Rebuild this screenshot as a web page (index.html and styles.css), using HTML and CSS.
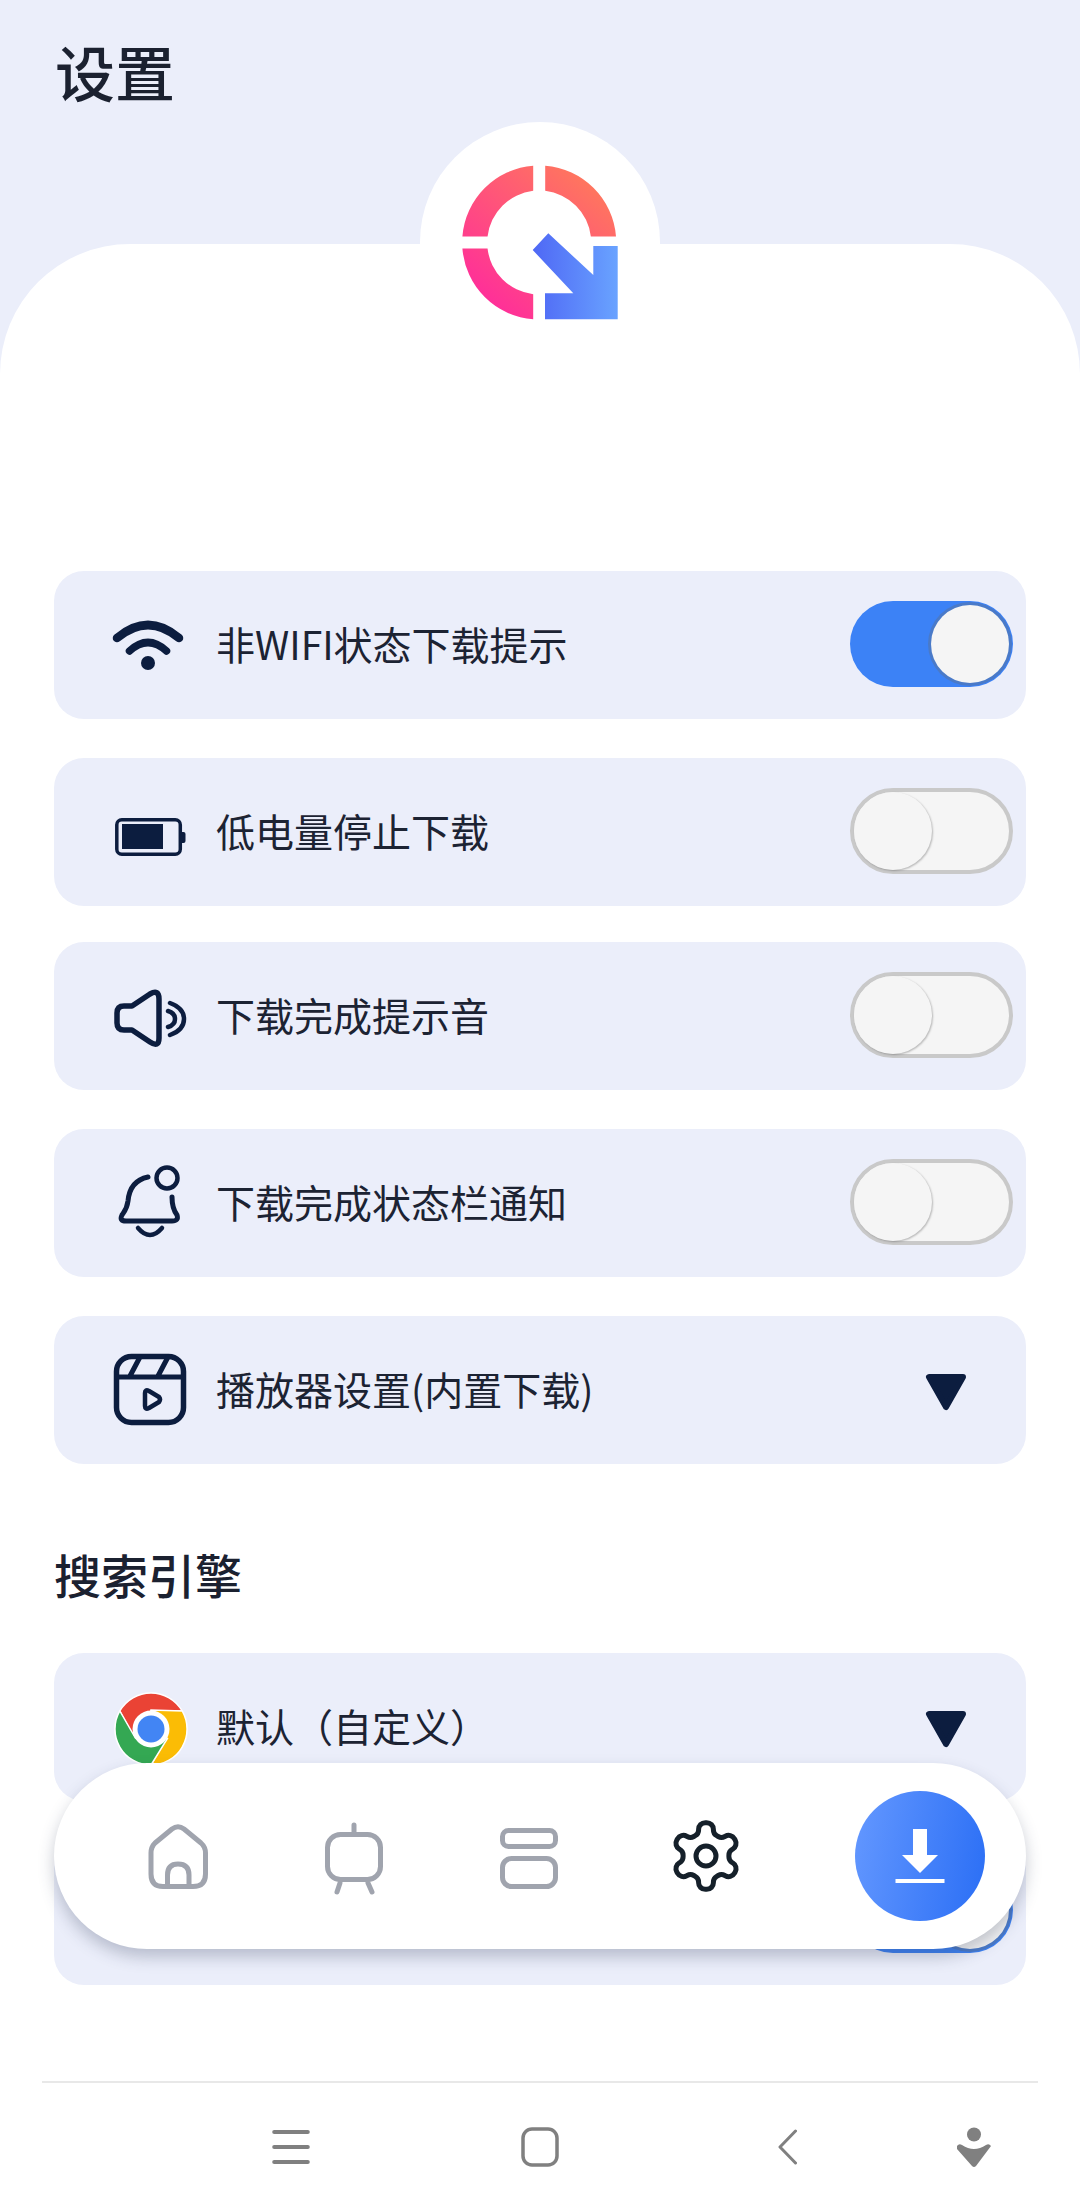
FILE: index.html
```html
<!DOCTYPE html>
<html lang="zh-CN">
<head>
<meta charset="utf-8">
<title>设置</title>
<link rel="stylesheet" href="styles.css">
</head>
<body>
<div class="page">
  <header class="header"><h1 class="title">设置</h1></header>
  <main class="sheet">
    <div class="logo-badge">
      <svg class="logo" viewBox="430 130 220 220" width="220" height="220">
        <defs>
          <linearGradient id="ringGrad" gradientUnits="userSpaceOnUse" x1="600" y1="170" x2="480" y2="310"><stop offset="0" stop-color="#ff7d58"/><stop offset="1" stop-color="#ff2a9d"/></linearGradient>
          <linearGradient id="arrowGrad" gradientUnits="userSpaceOnUse" x1="533" y1="280" x2="618" y2="280"><stop offset="0" stop-color="#4f68f5"/><stop offset="1" stop-color="#69a3ff"/></linearGradient>
        </defs>
        <path fill="url(#ringGrad)" d="M533.2 165.7A77 77 0 0 0 462.4 236.5H487.55A52 52 0 0 1 533.2 190.85Z"/>
        <path fill="url(#ringGrad)" d="M545.2 165.7A77 77 0 0 1 616 236.5H590.85A52 52 0 0 0 545.2 190.85Z"/>
        <path fill="url(#ringGrad)" d="M533.2 319.3A77 77 0 0 1 462.4 248.5H487.55A52 52 0 0 0 533.2 294.15Z"/>
        <path fill="url(#arrowGrad)" d="M548.3 233.3L532.7 250L573.3 293.3H545V319.3H617.7V246H593.3V275Z"/>
      </svg>
    </div>

    <section class="group">
      <div class="card">
        <svg class="icon" viewBox="0 0 76 80"><path class="st" stroke-width="8.500" d="M7 33Q38 7 69 33"/><path class="st" stroke-width="7.500" d="M19.500 46Q38 29 56.500 46"/><circle class="fl" cx="38" cy="58" r="7"/></svg>
        <span class="label">非WIFI状态下载提示</span>
        <span class="toggle on"><span class="knob"></span></span>
      </div>
      <div class="card">
        <svg class="icon" viewBox="0 0 76 80"><rect class="st" stroke-width="3.500" x="6.800" y="27.800" width="63.500" height="34.500" rx="5"/><rect class="fl" x="12" y="32" width="41" height="25"/><path class="fl" d="M72 40h1.500a2 2 0 0 1 2 2v7a2 2 0 0 1-2 2H72Z"/></svg>
        <span class="label">低电量停止下载</span>
        <span class="toggle"><span class="knob"></span></span>
      </div>
      <div class="card card-close">
        <svg class="icon" viewBox="0 0 76 80"><path class="st" stroke-width="5.500" d="M14 30H22L40 18Q49 13 49 23V62Q49 72 40 66L22 54H14Q7 54 7 47V37Q7 30 14 30Z"/><path class="st" stroke-width="4.500" d="M60 27Q74 32 74 43Q74 54 60 59"/><path class="st" stroke-width="4.500" d="M58 35Q65 37 65 43Q65 49 58 51"/></svg>
        <span class="label">下载完成提示音</span>
        <span class="toggle"><span class="knob"></span></span>
      </div>
      <div class="card">
        <svg class="icon" viewBox="0 0 76 80"><circle class="st" stroke-width="4.500" cx="57" cy="15" r="10.500"/><path class="st" stroke-width="5" d="M38 14C24 17 19 27 18 38C17 46 14 49 12 52Q9 58 16 58H62Q69 58 67 52C64 48 62 43 62 34"/><path class="st" stroke-width="4.500" d="M28 65Q40 79 52 65"/></svg>
        <span class="label">下载完成状态栏通知</span>
        <span class="toggle"><span class="knob"></span></span>
      </div>
      <div class="card">
        <svg class="icon" viewBox="0 0 76 80"><rect class="st" stroke-width="5.500" x="6.500" y="6.500" width="67" height="66" rx="15"/><path class="st" stroke-width="5" d="M6.500 27H73.500M30 7L20 26M58 7L48 26"/><path class="st" stroke-width="4.500" d="M35 43Q35 39 39 41L49 47Q51 49.500 49 52L39 58Q35 60 35 56Z"/></svg>
        <span class="label">播放器设置(内置下载)</span>
        <svg class="caret" viewBox="0 0 44 40"><path class="caret-path" d="M5 5H39L22 35Z"/></svg>
      </div>
    </section>

    <h2 class="section-title">搜索引擎</h2>

    <section class="group group-tight">
      <div class="card">
        <svg class="icon" viewBox="0 0 76 80">
          <path class="seg-red" d="M9.800 24A36 36 0 0 1 72.200 24H41L41 42L24.550 51.500Z"/>
          <path class="seg-yellow" transform="rotate(120 41 42)" d="M9.800 24A36 36 0 0 1 72.200 24H41L41 42L24.550 51.500Z"/>
          <path class="seg-green" transform="rotate(240 41 42)" d="M9.800 24A36 36 0 0 1 72.200 24H41L41 42L24.550 51.500Z"/>
          <circle class="chrome-ring" cx="41" cy="42" r="18.500"/>
          <circle class="chrome-dot" cx="41" cy="42" r="13.500"/>
        </svg>
        <span class="label">默认（自定义）</span>
        <svg class="caret" viewBox="0 0 44 40"><path class="caret-path" d="M5 5H39L22 35Z"/></svg>
      </div>
      <div class="card">
        <span class="toggle on"><span class="knob"></span></span>
      </div>
    </section>

    <footer class="sysbar">
      <div class="sysbar-icons">
        <svg class="sys sys-menu" viewBox="0 0 38 36"><path class="sys-st" stroke-width="4" d="M2.200 3H35.800M2.200 18H35.800M2.200 33H35.800"/></svg>
        <svg class="sys sys-home" viewBox="0 0 38 40"><rect class="sys-st" stroke-width="3.500" x="2" y="2" width="34" height="36" rx="9"/></svg>
        <svg class="sys sys-back" viewBox="0 0 19 36"><path class="sys-st" stroke-width="3" d="M17.500 2L2 18L17.500 34"/></svg>
        <svg class="sys sys-person" viewBox="0 0 36 40"><ellipse class="sys-fl" cx="18" cy="7.500" rx="7" ry="7"/><path class="sys-fl" d="M1 19Q3 16 6 18Q12 22 18 22Q24 22 30 18Q33 16 35 19L20 39Q18 41 16 39L1 22Z"/></svg>
      </div>
    </footer>
  </main>

  <nav class="tabbar">
    <div class="tab">
      <svg class="tab-icon" viewBox="0 0 80 80"><path class="tab-st" d="M34 13Q40 8.500 46 13L63 27Q67.500 31 67.500 37V58Q67.500 70.500 55 70.500H25Q13 70.500 13 58V37Q13 31 17 27Z"/><path class="tab-st" d="M29.500 70V59Q29.500 48 40 48Q51 48 51 59V70"/></svg>
    </div>
    <div class="tab">
      <svg class="tab-icon" viewBox="0 0 80 80"><rect class="tab-st" x="13.500" y="18.500" width="53" height="45" rx="13"/><path class="tab-st" d="M40 9V18M26 67L23 76M54 67L58 76"/></svg>
    </div>
    <div class="tab">
      <svg class="tab-icon" viewBox="1 0 80 80"><rect class="tab-st" x="13.500" y="14.500" width="53" height="16" rx="6"/><rect class="tab-st" x="13.500" y="42.500" width="53" height="28" rx="9"/></svg>
    </div>
    <div class="tab">
      <svg class="tab-gear" viewBox="0 0 24 24"><path class="gear-st" d="M12.22 2h-.44a2 2 0 0 0-2 2v.18a2 2 0 0 1-1 1.730l-.43.25a2 2 0 0 1-2 0l-.15-.08a2 2 0 0 0-2.730.73l-.22.38a2 2 0 0 0 .73 2.730l.15.1a2 2 0 0 1 1 1.720v.51a2 2 0 0 1-1 1.740l-.15.09a2 2 0 0 0-.73 2.730l.22.38a2 2 0 0 0 2.730.73l.15-.08a2 2 0 0 1 2 0l.43.25a2 2 0 0 1 1 1.730V20a2 2 0 0 0 2 2h.44a2 2 0 0 0 2-2v-.18a2 2 0 0 1 1-1.730l.43-.25a2 2 0 0 1 2 0l.15.08a2 2 0 0 0 2.730-.73l.22-.39a2 2 0 0 0-.73-2.730l-.15-.08a2 2 0 0 1-1-1.740v-.5a2 2 0 0 1 1-1.740l.15-.09a2 2 0 0 0 .73-2.730l-.22-.38a2 2 0 0 0-2.730-.73l-.15.08a2 2 0 0 1-2 0l-.43-.25a2 2 0 0 1-1-1.730V4a2 2 0 0 0-2-2z"/><circle class="gear-st" cx="12" cy="12" r="3"/></svg>
    </div>
    <button class="fab" type="button" aria-label="下载">
      <svg class="fab-icon" viewBox="0 0 50 54"><path class="fab-fl" d="M18 0H32V26H43L25 44L7 26H18Z"/><rect class="fab-fl" x="0.500" y="50" width="49" height="4"/></svg>
    </button>
  </nav>
</div>
</body>
</html>
```
FILE: styles.css
```css
* { box-sizing: border-box; }
html, body { margin: 0; padding: 0; }
body {
  width: 1080px;
  height: 2211px;
  overflow: hidden;
  background: #ebeefa;
  font-family: "Noto Sans CJK SC", "Noto Sans", sans-serif;
  color: #1c2333;
}
.page {
  position: relative;
  width: 1080px;
  height: 2211px;
  display: flex;
  flex-direction: column;
}
.header {
  height: 244px;
  padding: 41px 0 0 55px;
  flex: none;
}
.title {
  margin: 0;
  font-size: 60px;
  line-height: 60px;
  font-weight: 500;
  color: #1b2130;
}
.sheet {
  position: relative;
  flex: 1;
  display: flex;
  flex-direction: column;
  background: #fff;
  border-radius: 130px 130px 0 0;
  padding-top: 327px;
}
.logo-badge {
  position: absolute;
  top: -122px;
  left: 420px;
  width: 240px;
  height: 240px;
  padding-bottom: 4px;
  border-radius: 50%;
  background: #fff;
  display: flex;
  align-items: center;
  justify-content: center;
}
.logo { display: block; flex: none; }
.group {
  display: flex;
  flex-direction: column;
  gap: 39px;
  padding: 0 54px;
}
.group-tight { gap: 36px; }
.card {
  height: 148px;
  border-radius: 30px;
  background: #ebeefa;
  display: flex;
  align-items: center;
  padding: 0 13px 0 56px;
}
.card-close { margin-top: -3px; }
.icon {
  width: 76px;
  height: 80px;
  flex: none;
  overflow: visible;
}
.st { fill: none; stroke: #0c1d3f; stroke-linecap: round; stroke-linejoin: round; }
.fl { fill: #0c1d3f; }
.label {
  margin-left: 30px;
  padding-bottom: 5px;
  font-size: 39px;
  line-height: 50px;
  white-space: nowrap;
}
.toggle {
  margin-left: auto;
  margin-bottom: 2px;
  width: 163px;
  height: 86px;
  flex: none;
  border-radius: 43px;
  border: 4px solid #c9c9c9;
  background: #f5f5f5;
  display: flex;
  align-items: center;
  justify-content: flex-start;
}
.toggle .knob {
  width: 78px;
  height: 78px;
  border-radius: 50%;
  background: #f5f5f5;
  box-shadow: 1px 1px 2px rgba(0, 0, 0, .25);
}
.toggle.on {
  border: 0;
  background: #3c82f6;
  justify-content: flex-end;
  padding-right: 4px;
}
.toggle.on .knob { box-shadow: 0 0 0 3px #4a7ac8; }
.caret {
  margin-left: auto;
  margin-right: 45px;
  margin-top: 4px;
  width: 44px;
  height: 40px;
  flex: none;
}
.caret-path { fill: #0c1d3f; stroke: #0c1d3f; stroke-width: 6; stroke-linejoin: round; }
.seg-red { fill: #ea4335; stroke: #fff; stroke-width: 1.5; }
.seg-yellow { fill: #fbbc05; stroke: #fff; stroke-width: 1.5; }
.seg-green { fill: #34a853; stroke: #fff; stroke-width: 1.5; }
.chrome-ring { fill: #fff; }
.chrome-dot { fill: #4285f4; }
.section-title {
  margin: 0;
  height: 189px;
  padding: 30px 0 0 54px;
  display: flex;
  align-items: center;
  font-size: 47px;
  line-height: 60px;
  font-weight: 500;
  color: #1b2130;
}
.sysbar {
  margin: auto 42px 0;
  height: 130px;
  border-top: 2px solid #e8e8e8;
  display: flex;
  align-items: center;
}
.sysbar-icons {
  display: flex;
  align-items: center;
  padding-left: 230px;
}
.sys { display: block; flex: none; }
.sys-menu { width: 38px; height: 36px; }
.sys-home { width: 38px; height: 40px; margin-left: 211px; }
.sys-back { width: 19px; height: 36px; margin-left: 219px; }
.sys-person { width: 36px; height: 40px; margin-left: 159px; }
.sys-st { fill: none; stroke: #808080; stroke-linecap: round; stroke-linejoin: round; }
.sys-fl { fill: #808080; }
.tabbar {
  position: absolute;
  left: 54px;
  top: 1763px;
  width: 972px;
  height: 186px;
  border-radius: 93px;
  background: #fff;
  box-shadow: 0 8px 16px rgba(50, 60, 90, .28);
  display: flex;
  align-items: center;
  padding: 0 41px 0 36px;
}
.tab {
  width: 176px;
  display: flex;
  align-items: center;
  justify-content: center;
  flex: none;
}
.tab-icon { width: 80px; height: 80px; display: block; }
.tab-st { fill: none; stroke: #a0a4ae; stroke-width: 5; stroke-linecap: round; stroke-linejoin: round; }
.tab-gear { width: 80px; height: 80px; display: block; }
.gear-st { fill: none; stroke: #15202a; stroke-width: 1.5; stroke-linecap: round; stroke-linejoin: round; }
.fab {
  margin-left: auto;
  width: 130px;
  height: 130px;
  border: 0;
  padding: 0;
  border-radius: 50%;
  background: linear-gradient(100deg, #6498ff, #2a6ef5);
  display: flex;
  align-items: center;
  justify-content: center;
}
.fab-icon { width: 50px; height: 54px; display: block; }
.fab-fl { fill: #fff; }
```
